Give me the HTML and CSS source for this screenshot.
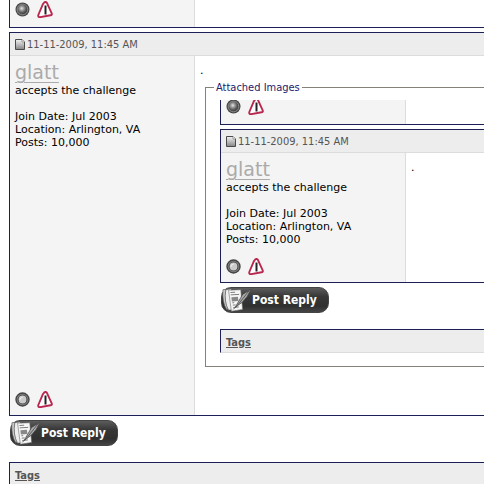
FILE: index.html
```html
<!doctype html>
<html lang="en">
<head>
<meta charset="utf-8">
<meta name="viewport" content="width=device-width, initial-scale=1">
<title>Thread</title>
<link rel="stylesheet" href="styles.css">
</head>
<body>
<svg class="sprites" aria-hidden="true">
    <defs>
        <radialGradient id="orbDark" cx="0.42" cy="0.4" r="0.6">
            <stop offset="0" stop-color="#e4e4e4"/>
            <stop offset="0.4" stop-color="#999"/>
            <stop offset="1" stop-color="#3c3c3c"/>
        </radialGradient>
        <linearGradient id="page" x1="0" y1="0" x2="0" y2="1">
            <stop offset="0" stop-color="#f4f4f4"/>
            <stop offset="1" stop-color="#858585"/>
        </linearGradient>
        <symbol id="orb" viewBox="0 0 15 15">
            <circle cx="7.5" cy="7.5" r="7" fill="#444"/>
            <circle cx="7.5" cy="7.5" r="5.400" fill="#5c5c5c" stroke="#8b8b8b"/>
            <circle cx="7.5" cy="7.3" r="4.500" fill="url(#orbDark)"/>
        </symbol>
        <symbol id="orb-off" viewBox="0 0 15 15">
            <circle cx="7.5" cy="7.5" r="6.500" fill="#8c8c8c" stroke="#444" stroke-width="1.400"/>
            <circle cx="7.5" cy="7.5" r="4.500" fill="#cacaca" stroke="#4c4c4c" stroke-width="1.200"/>
            <path d="M4.900 8a3 3 0 0 1 3-3" fill="none" stroke="#eee"/>
        </symbol>
        <symbol id="report" viewBox="0 0 16 17">
            <path d="M7.200 1.500Q8.500 .4 9.800 1.600L14.700 12.400Q15.300 14 13.500 14.300L3 16.200Q.8 16.300 1.300 14L5.800 3.300z" fill="#fff" stroke="#b9294f" stroke-width="1.900" stroke-linejoin="round"/>
            <path d="M8.500 4.500V13.500" stroke="#222" stroke-width="2"/>
        </symbol>
        <symbol id="post" viewBox="0 0 10 11">
            <path d="M.5 .5h6.500l2.500 2.500v7.500h-9z" fill="url(#page)" stroke="#4a4a4a"/>
            <path d="M7 .5v2.500h2.500" fill="#fff" stroke="#777" stroke-width=".7"/>
        </symbol>
        <symbol id="reply" viewBox="0 0 32 26">
            <path d="M1 2l7-1 3 21-6 1Q0 16 1 2z" fill="#ccc" stroke="#555" stroke-width=".7"/>
            <path d="M4 2l6-1 3 22-6 1Q2 15 4 2z" fill="#eee" stroke="#444" stroke-width=".7"/>
            <path d="M7 2.500L20 2l2 21-12 2z" fill="#f6f6f6" stroke="#666" stroke-width=".6"/>
            <path d="M9 5l5-.3M9.300 7.500l9-.5M11 16l2-.2M11.500 18.500l3-.3M12 21l6-.6" stroke="#777"/>
            <path d="M10 10l7-.5.5 4.500-7 .5z" fill="#888"/>
            <path d="M31 1.500L22 7l-8 14 8-6 5-6z" fill="#aaa" stroke="#444" stroke-width=".8"/>
            <path d="M29 3L17 18l-5 5" fill="none" stroke="#555"/>
        </symbol>
    </defs>
</svg>

<main class="thread">
    <section class="post post-cut">
        <div class="post-body">
            <div class="user">
                <div class="status">
                    <svg class="orb"><use href="#orb"/></svg>
                    <a href="#report" aria-label="Report"><svg class="report"><use href="#report"/></svg></a>
                </div>
            </div>
        </div>
    </section>

    <article class="post">
        <header class="post-head">
            <svg class="post-icon"><use href="#post"/></svg>
            <span>11-11-2009, 11:45 AM</span>
        </header>
        <div class="post-body">
            <div class="user">
                <div>
                    <a class="name" href="#glatt">glatt</a>
                    <p>accepts the challenge</p>
                    <p class="info">Join Date: Jul 2003<br>Location: Arlington, VA<br>Posts: 10,000</p>
                </div>
                <div class="status">
                    <svg class="orb"><use href="#orb-off"/></svg>
                    <a href="#report" aria-label="Report"><svg class="report"><use href="#report"/></svg></a>
                </div>
            </div>
            <div class="message message-attached">
                <p>.</p>
                <fieldset class="attached">
                    <legend>Attached Images</legend>

                    <section class="post post-cut">
                        <div class="post-body">
                            <div class="user">
                                <div class="status">
                                    <svg class="orb"><use href="#orb"/></svg>
                                    <a href="#report" aria-label="Report"><svg class="report"><use href="#report"/></svg></a>
                                </div>
                            </div>
                        </div>
                    </section>
                    <article class="post">
                        <header class="post-head">
                            <svg class="post-icon"><use href="#post"/></svg>
                            <span>11-11-2009, 11:45 AM</span>
                        </header>
                        <div class="post-body">
                            <div class="user">
                                <div>
                                    <a class="name" href="#glatt">glatt</a>
                                    <p>accepts the challenge</p>
                                    <p class="info">Join Date: Jul 2003<br>Location: Arlington, VA<br>Posts: 10,000</p>
                                </div>
                                <div class="status">
                                    <svg class="orb"><use href="#orb-off"/></svg>
                                    <a href="#report" aria-label="Report"><svg class="report"><use href="#report"/></svg></a>
                                </div>
                            </div>
                            <div class="message">
                                <p>.</p>
                            </div>
                        </div>
                    </article>
                    <button class="reply" type="button"><svg class="reply-icon"><use href="#reply"/></svg>Post Reply</button>
                    <div class="tags"><a href="#tags">Tags</a></div>
                </fieldset>
            </div>
        </div>
    </article>

    <button class="reply" type="button"><svg class="reply-icon"><use href="#reply"/></svg>Post Reply</button>
    <div class="tags"><a href="#tags">Tags</a></div>
</main>
</body>
</html>
```

FILE: styles.css
```css
*{
    box-sizing: border-box;
    margin: 0;
    padding: 0;
}
body{
    background: #fff;
    color: #000;
    font: 11px/13px "DejaVu Sans", Verdana, sans-serif;
    overflow: hidden;
}
svg{
    display: block;
    flex: none;
}
.sprites{
    position: absolute;
    width: 0;
    height: 0;
}
.thread{
    padding-left: 9px;
}
.post{
    border: 1px solid #1c2058;
    border-right: 0;
    margin-bottom: 4px;
}
.post-cut{
    border-top: 0;
}
.post-head{
    display: flex;
    align-items: center;
    gap: 2px;
    height: 23px;
    padding: 1px 5px 0;
    background: #ededed;
    border-bottom: 1px solid #dcdcdc;
    color: #555;
    font-family: "DejaVu Sans Condensed", Tahoma, sans-serif;
}
.post-icon{
    width: 10px;
    height: 11px;
}
.post-body{
    display: flex;
}
.user{
    display: flex;
    flex: none;
    flex-direction: column;
    justify-content: space-between;
    gap: 12px;
    width: 185px;
    padding: 5px 5px 7px;
    background: #f4f4f4;
    border-right: 1px solid #dcdcdc;
}
.post-cut .user{
    padding: 1px 5px 9px;
}
.name{
    display: block;
    width: max-content;
    height: 23px;
    color: #aaa;
    font-size: 19px;
    line-height: 23px;
    text-decoration: underline;
    text-decoration-thickness: 1px;
    text-underline-offset: 3px;
}
.info{
    margin-top: 13px;
}
.status{
    display: flex;
    align-items: center;
    gap: 7px;
}
.orb{
    width: 15px;
    height: 15px;
}
.report{
    width: 16px;
    height: 17px;
}
.message{
    flex: 1;
    min-width: 0;
    padding: 8px 0 0 5px;
}
.message-attached{
    padding: 8px 0 48px 5px;
}
.attached{
    min-width: 0;
    margin-top: 4px;
    margin-left: 5px;
    padding: 6px 0 13px 14px;
    border: 1px solid #848278;
    border-right: 0;
}
.attached legend{
    margin-left: -6px;
    padding: 0 2px;
    color: #22226b;
    font-family: "DejaVu Sans Condensed", Tahoma, sans-serif;
}
.attached .post-cut{
    height: 25px;
    overflow: hidden;
}
.attached .post-cut .post-body{
    height: 24px;
    align-items: flex-end;
}
.reply{
    display: flex;
    align-items: center;
    width: 108px;
    height: 26px;
    margin: 0 0 16px 1px;
    border: 1px solid #444;
    border-radius: 10px;
    background: linear-gradient(#5c5c5c, #383838 35%, #303030 75%, #444);
    color: #fff;
    font: bold 12px/16px "DejaVu Sans Condensed", Tahoma, sans-serif;
    white-space: nowrap;
}
.reply-icon{
    width: 30px;
    height: 26px;
}
.tags{
    height: 24px;
    padding: 6px 5px 0;
    background: #ededed;
    border: 1px solid #1c2058;
    border-right: 0;
    border-bottom-color: #dcdcdc;
    font-weight: bold;
    font-family: "DejaVu Sans Condensed", Tahoma, sans-serif;
}
.tags a{
    color: #555;
}
```
